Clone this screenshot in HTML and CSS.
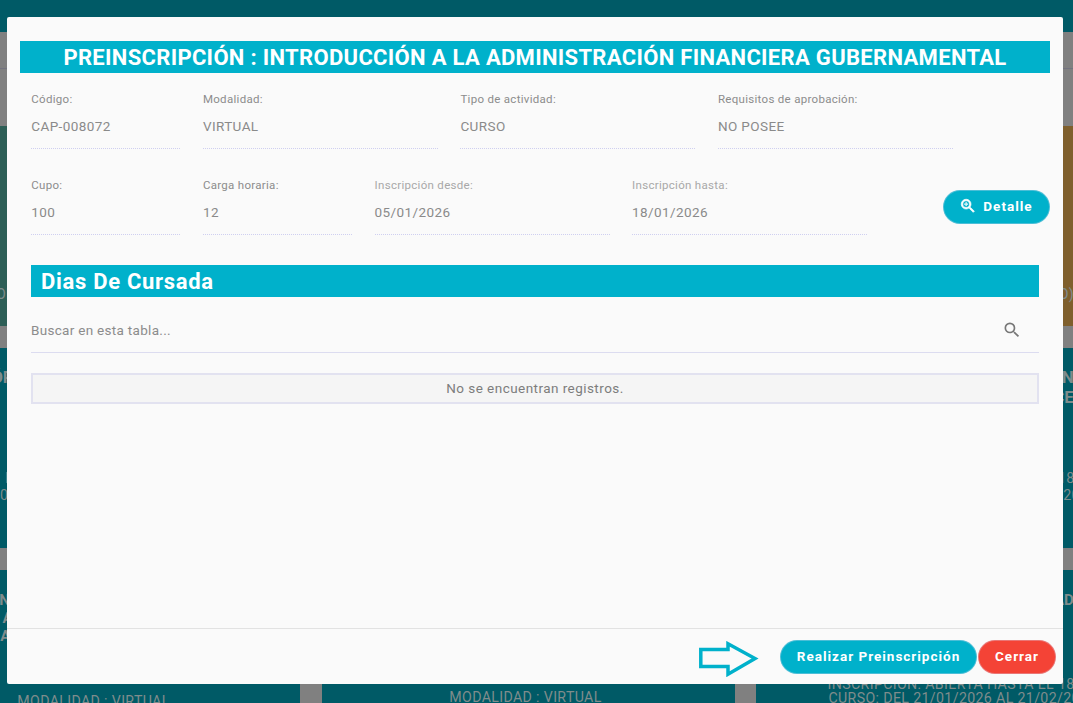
FILE: index.html
```html
<!DOCTYPE html>
<html lang="es">
<head>
<meta charset="utf-8">
<title>Preinscripción</title>
<link rel="stylesheet" href="styles.css">
</head>
<body>
<div class="page">
  <div class="topbar"></div>
  <div class="band"><div class="band-line"></div></div>
  <div class="cards">
    <div class="card green"><p class="foot-a">ORGANIZACIÓN DEL ESTADO</p></div>
    <div class="card gray"></div>
    <div class="card brown"><p class="foot-a">GESTIÓN DEL SECTOR (MÓDULO)</p></div>

    <div class="card teal tall">
      <p class="ctitle">ÓRGANOS DE LA GESTIÓN</p>
      <p class="cinfo first">INSCRIPCIÓN: ABIERTA AL</p>
      <p class="cinfo">CUPO 100: DEL 21/01/2026 AL 21/02/2026</p>
    </div>
    <div class="card teal tall"></div>
    <div class="card teal tall">
      <p class="ctitle">LEY DE PROCEDIMIENTO: EN</p>
      <p class="ctitle">DE GOBIERNO Y GESTIÓN CE</p>
      <p class="cinfo first second">INSCRIPCIÓN: ABIERTA HASTA EL 18/01</p>
      <p class="cinfo">CURSO: DEL 21/01/2026 AL 21/02/2026</p>
    </div>

    <div class="card teal">
      <p class="ltitle">NORMATIVA DE LOS ENTES</p>
      <p class="ltitle">AUDITORÍA DE LAS ÁREAS</p>
      <p class="ltitle">ANÁLISIS DE LAS NORMAS</p>
      <p class="mod mod-left">MODALIDAD : VIRTUAL</p>
    </div>
    <div class="card teal"><p class="mod mod-mid">MODALIDAD : VIRTUAL</p></div>
    <div class="card teal">
      <p class="ltitle">CONTRATACIÓN EN LA ENTIDAD</p>
      <p class="low">INSCRIPCIÓN: ABIERTA HASTA EL 18/01</p>
      <p class="low low2">CURSO: DEL 21/01/2026 AL 21/02/2026</p>
    </div>
  </div>
</div>

<div class="modal">
  <div class="modal-body">
    <h1 class="main-title">PREINSCRIPCIÓN : INTRODUCCIÓN A LA ADMINISTRACIÓN FINANCIERA GUBERNAMENTAL</h1>
    <div class="fields">
      <div class="field s2"><label>Código:</label><div class="val">CAP-008072</div></div>
      <div class="field s3"><label>Modalidad:</label><div class="val">VIRTUAL</div></div>
      <div class="field s3"><label>Tipo de actividad:</label><div class="val">CURSO</div></div>
      <div class="field s3"><label>Requisitos de aprobación:</label><div class="val">NO POSEE</div></div>
      <div class="filler"></div>
      <div class="field s2"><label>Cupo:</label><div class="val">100</div></div>
      <div class="field s2"><label>Carga horaria:</label><div class="val">12</div></div>
      <div class="field s3"><label class="light">Inscripción desde:</label><div class="val">05/01/2026</div></div>
      <div class="field s3"><label class="light">Inscripción hasta:</label><div class="val">18/01/2026</div></div>
      <div class="detail-cell">
        <button class="btn btn-detail" type="button">
          <svg class="ico-zoom" viewBox="0 0 24 24" width="18" height="18" aria-hidden="true"><path fill="#fff" stroke="#fff" stroke-width=".9" d="M15.5 14h-.79l-.28-.27A6.47 6.47 0 0 0 16 9.5 6.5 6.5 0 1 0 9.5 16c1.61 0 3.09-.59 4.23-1.57l.27.28v.79l5 4.99L20.490 19l-4.990-5zm-6 0C7.010 14 5 11.990 5 9.500S7.010 5 9.500 5 14 7.010 14 9.500 11.990 14 9.500 14z"/><path fill="#fff" stroke="#fff" stroke-width=".5" d="M12 10h-2v2H9v-2H7V9h2V7h1v2h2v1z"/></svg>
          <span>Detalle</span>
        </button>
      </div>
    </div>
    <div class="section">
      <h2 class="section-title">Dias De Cursada</h2>
      <div class="search">
        <span class="search-text">Buscar en esta tabla...</span>
        <svg class="ico-search" viewBox="0 0 24 24" width="20" height="20" aria-hidden="true"><path fill="#777" d="M15.5 14h-.79l-.28-.27A6.47 6.47 0 0 0 16 9.5 6.5 6.5 0 1 0 9.5 16c1.61 0 3.09-.59 4.23-1.57l.27.28v.79l5 4.99L20.490 19l-4.990-5zm-6 0C7.010 14 5 11.990 5 9.500S7.010 5 9.500 5 14 7.010 14 9.500 11.990 14 9.500 14z"/></svg>
      </div>
      <div class="empty">No se encuentran registros.</div>
    </div>
  </div>
  <div class="modal-footer">
    <svg class="arrow" viewBox="0 0 60 36" width="60" height="36" aria-hidden="true"><path fill="none" stroke="#00b1cb" stroke-width="3.500" d="M1.800 8.500H29V2.800L56 17.500 29 33.200V25.500H1.800Z"/></svg>
    <button class="btn btn-primary" type="button">Realizar Preinscripción</button>
    <button class="btn btn-danger" type="button">Cerrar</button>
  </div>
</div>
</body>
</html>
```

FILE: styles.css
```css
* { box-sizing: border-box; }
html, body { margin: 0; padding: 0; height: 703px; overflow: hidden; }
body { background: #005a66; font-family: Roboto, "Liberation Sans", sans-serif; color: #888; position: relative; }
p, h1, h2 { margin: 0; }

/* Dimmed page behind the modal */
.page { width: 1073px; height: 703px; overflow: hidden; }
.topbar { height: 32px; background: #005a66; }
.band { height: 94px; background: #808080; padding-top: 36px; }
.band-line { height: 1px; background: #73737f; }
.cards { display: grid; grid-template-columns: repeat(3, 413px); grid-auto-rows: 200px; column-gap: 21.500px; row-gap: 22px; margin-left: -113px; width: 1300px; position: relative; }
.cards::before { content: ""; position: absolute; inset: 0; background: #808080; z-index: -1; }
.card { text-align: center; color: #7f8c8c; font-size: 14.200px; letter-spacing: .35px; white-space: nowrap; overflow: visible; height: 200px; }
.green { background: #2d5e56; }
.gray { background: #808080; }
.brown { background: #7f5f2c; }
.teal { background: #005a66; }
.foot-a { padding-top: 160px; }
.card.tall { padding-top: 19px; }
.ctitle { font-size: 17px; font-weight: 700; line-height: 20px; letter-spacing: 0; }
.cinfo { line-height: 17px; }
.cinfo.first { margin-top: 83px; }
.cinfo.second { margin-top: 63px; }
.ltitle { font-size: 15px; font-weight: 700; line-height: 18px; letter-spacing: 0; }
.card .ltitle:first-child { margin-top: 21px; }
.mod { line-height: 18px; }
.mod-left { margin-top: 47px; }
.mod-mid { margin-top: 118px; padding-right: 5px; }
.low { line-height: 14px; }
.card .low:nth-child(2) { margin-top: 68px; }

/* Modal */
.modal { position: absolute; left: 7px; top: 17px; width: 1056px; height: 667px; background: #fafafa; border-radius: 2px; display: flex; flex-direction: column; }
.modal-body { flex: 1; padding: 24px 13px 0 13px; min-height: 0; }
.main-title { height: 32px; background: #00b1cb; color: #fff; font-size: 22px; font-weight: 700; letter-spacing: .32px; line-height: 33px; text-align: center; white-space: nowrap; }
.fields { display: grid; grid-template-columns: repeat(12, 1fr); column-gap: 22.500px; padding: 0 11.250px; margin-top: 17px; }
.field { height: 86px; }
.s2 { grid-column: span 2; }
.s3 { grid-column: span 3; }
.filler { grid-column: span 1; }
.field label { display: block; font-size: 11.500px; letter-spacing: .3px; line-height: 18px; color: #8c8c8c; }
.field label.light { color: #a8a8a8; }
.val { font-size: 13.500px; letter-spacing: .4px; line-height: 20px; margin-top: 8px; height: 33px; color: #8a8a8a; border-bottom: 1px dotted #cfcff0; }
.detail-cell { grid-column: span 2; display: flex; justify-content: flex-end; align-items: flex-start; padding-top: 14px; margin-right: -11.250px; }

.btn { border: 1px solid rgba(214, 214, 238, .35); border-radius: 17px; height: 34px; padding: 0 0 2px; color: #fff; font-family: inherit; font-weight: 700; font-size: 13.500px; letter-spacing: 1px; display: inline-flex; align-items: center; justify-content: center; cursor: pointer; }
.btn-detail { width: 107px; background: #00b1cb; gap: 6px; padding-right: 1px; }
.btn-primary { width: 197px; background: #00b1cb; margin-left: 21px; }
.btn-danger { width: 78px; background: #f44336; margin-left: 1px; }

.section { padding: 0 11px; margin-top: 3px; }
.section-title { height: 32px; background: #00b1cb; color: #fff; font-size: 22px; font-weight: 700; letter-spacing: .7px; line-height: 33px; padding-left: 10px; }
.search { height: 56px; border-bottom: 1px solid #dcdcf0; display: flex; align-items: center; justify-content: space-between; padding: 10px 17px 0 0; }
.search-text { font-size: 13.500px; letter-spacing: .3px; color: #8c8c8c; }
.empty { margin-top: 20px; height: 31px; background: #f5f5f5; border: 2px solid #e2e2f0; font-size: 13.500px; letter-spacing: .45px; line-height: 27px; text-align: center; color: #7d7d7d; }

.modal-footer { height: 56px; border-top: 1px solid #e2e2e2; display: flex; align-items: flex-start; justify-content: flex-end; padding: 11px 7px 0 0; }
.arrow { display: block; margin-top: 1px; }
```
